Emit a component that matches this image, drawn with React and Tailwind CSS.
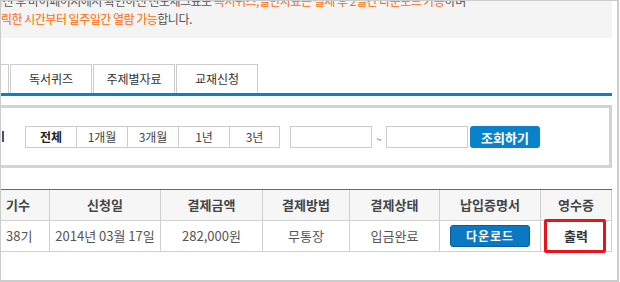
import React from 'react';

// Payment history panel: notice, tabs, period search and receipt table
const periods = ["전체", "1개월", "3개월", "1년", "3년"];

const columns = [
  { label: "기수", align: "justify-start pl-[5px]" },
  { label: "신청일" },
  { label: "결제금액" },
  { label: "결제방법" },
  { label: "결제상태" },
  { label: "납입증명서" },
  { label: "영수증" },
];

export default function App() {
  return (
    <div
      className="relative w-[619px] h-[282px] overflow-hidden bg-white border-t border-l border-r-2 border-b-2 border-[#cccccc] text-[12px] text-[#555]"
      style={{ fontFamily: '"Noto Sans CJK KR", "Noto Sans", sans-serif' }}
    >
      <div className="w-[611px]">
        {/* Notice box (first line runs off the top of the shot) */}
        <div className="flow-root h-[37px] bg-[#f4f4f4]">
          <div className="-mt-[9px] leading-[18px] whitespace-nowrap tracking-[-0.5px]">
            <p className="-ml-[30px]">
              결제하신 후 마이페이지에서 확인하신 진도체크표로{" "}
              <span className="text-[#ff6a00]">독서퀴즈,일반자료는 결제 후 2일간 다운로드 가능</span>하며
            </p>
            <p>
              <span className="text-[#ff6a00]">릭한 시간부터 일주일간 열람 가능</span>합니다.
            </p>
          </div>
        </div>

        {/* Tabs */}
        <div className="mt-[26px] flex h-[29px] gap-[1px] text-[#333]">
          <div className="w-[8px] border-t border-r border-[#cccccc]" />
          {["독서퀴즈", "주제별자료", "교재신청"].map((t) => (
            <div
              key={t}
              className="w-[82px] flex items-center justify-center border-t border-x border-[#cccccc]"
            >
              {t}
            </div>
          ))}
        </div>
        <div className="h-[3px] bg-[#0a80c9]" />

        {/* Period search */}
        <div className="mt-[9px] h-[63px] border-y-[3px] border-r-[3px] border-[#d3d3d3] flex items-center">
          <span className="ml-[1px] w-[2px] h-[11px] bg-[#3d556f]" />
          <div className="ml-[21px] flex h-[22px] mt-[1px]">
            {periods.map((p, i) => (
              <div
                key={p}
                className={
                  "w-[51px] flex items-center justify-center border-y border-l border-[#cccccc] " +
                  (i === periods.length - 1 ? "border-r " : "") +
                  (i === 0 ? "font-bold text-[#222]" : "text-[#444]")
                }
              >
                {p}
              </div>
            ))}
          </div>
          <div className="ml-[10px] mt-[1px] w-[82px] h-[22px] border border-[#cccccc]" />
          <span className="w-[14px] mt-[6px] text-center text-[9px] text-[#333]">~</span>
          <div className="mt-[1px] w-[82px] h-[22px] border border-[#cccccc]" />
          <button className="ml-[2px] mt-[1px] w-[70px] h-[22px] rounded-[3px] bg-[#0a82cb] text-white font-bold text-[13px] leading-none">
            조회하기
          </button>
        </div>

        {/* Receipt table */}
        <div className="mt-[21px] border-t border-[#1d7fc4]">
          <div className="grid grid-cols-[49px_111px_102px_87px_90px_101px_71px] h-[31px] bg-[#f6f6f6] font-bold text-[13px] text-[#444]">
            {columns.map((c) => (
              <div
                key={c.label}
                className={"flex items-center border-r border-b border-[#d0d0d0] " + (c.align || "justify-center")}
              >
                {c.label}
              </div>
            ))}
          </div>
          <div className="grid grid-cols-[49px_111px_102px_87px_90px_101px_71px] h-[31px] text-[13px] text-[#555]">
            <div className="flex items-center pl-[5px] border-r border-b border-[#d0d0d0]">38기</div>
            <div className="flex items-center justify-center border-r border-b border-[#d0d0d0]">2014년 03월 17일</div>
            <div className="flex items-center justify-center border-r border-b border-[#d0d0d0]">282,000원</div>
            <div className="flex items-center justify-center border-r border-b border-[#d0d0d0]">무통장</div>
            <div className="flex items-center justify-center border-r border-b border-[#d0d0d0]">입금완료</div>
            <div className="flex items-center justify-center border-r border-b border-[#d0d0d0]">
              <button className="w-[80px] h-[22px] rounded-[3px] border border-[#0a5c9c] bg-[#0b78c4] text-white font-bold text-[12px] tracking-[1px] leading-none">
                다운로드
              </button>
            </div>
            <div className="relative flex items-center justify-center border-r border-b border-[#d0d0d0] font-bold text-[#333]">
              출력
              <span className="absolute left-[3px] top-[-2px] w-[62px] h-[34px] border-[3px] border-[#e8141b] rounded-[2px]" />
            </div>
          </div>
        </div>
      </div>
    </div>
  );
}
